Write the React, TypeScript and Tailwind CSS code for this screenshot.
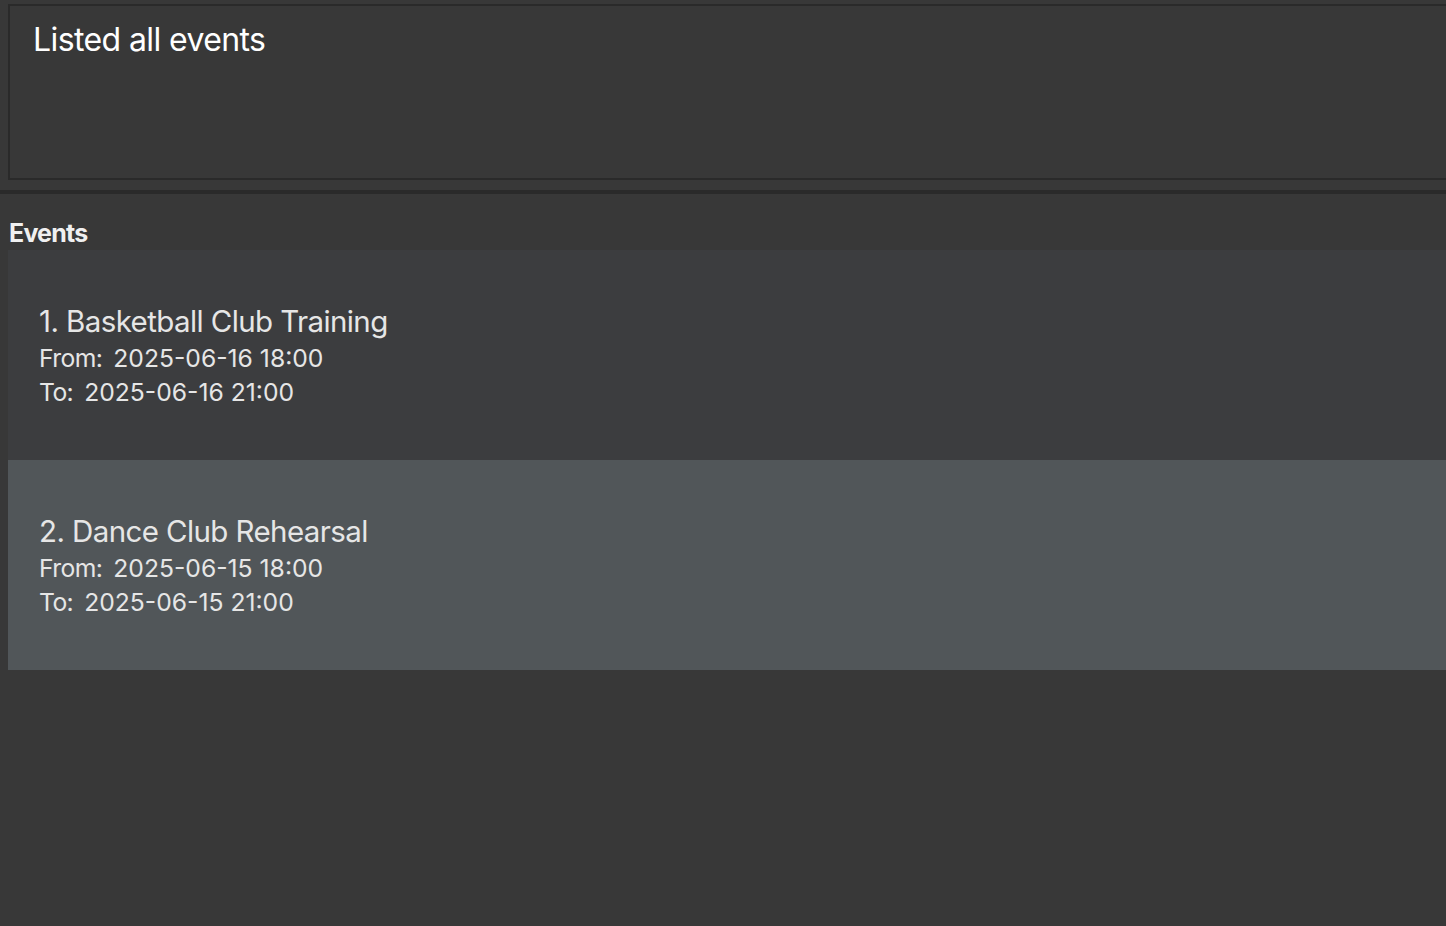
const events = [
  { title: "1. Basketball Club Training", from: "2025-06-16 18:00", to: "2025-06-16 21:00" },
  { title: "2. Dance Club Rehearsal", from: "2025-06-15 18:00", to: "2025-06-15 21:00" },
]

export default function App() {
  return (
    <div className="h-[926px] w-full overflow-hidden bg-[#383838] text-[#e6e6e6] font-['Inter',sans-serif]">
      <div className="pl-[8px] pt-[4px]">
        <div className="h-[176px] border-2 border-r-0 border-[#2a2a2a] bg-[#383838] pl-[23px] pt-[12px]">
          <p className="text-[32px] leading-[44px] tracking-[-0.6px] text-white">Listed all events</p>
        </div>
      </div>
      <div className="mt-[10px] h-[4px] bg-[#2a2a2a]" />
      <div className="pt-[22px]">
        <h2 className="pl-[9px] text-[25px] font-bold leading-[34px] tracking-[-0.8px] text-[#f0f0f0]">Events</h2>
        <div className="pl-[8px]">
          {events.map((ev, i) => (
            <div
              key={ev.title}
              className={`flex h-[210px] flex-col justify-center pl-[31px] ${i % 2 === 0 ? "bg-[#3c3d3f]" : "bg-[#515659]"}`}
            >
              <p className="text-[29.5px] leading-[40px] tracking-[-0.6px]">{ev.title}</p>
              <div className="flex gap-[11px] text-[24.7px] leading-[34px]">
                <span className="tracking-[-0.6px]">From:</span>
                <span>{ev.from}</span>
              </div>
              <div className="flex gap-[11px] text-[24.7px] leading-[34px]">
                <span className="tracking-[-0.6px]">To:</span>
                <span>{ev.to}</span>
              </div>
            </div>
          ))}
        </div>
      </div>
    </div>
  )
}
